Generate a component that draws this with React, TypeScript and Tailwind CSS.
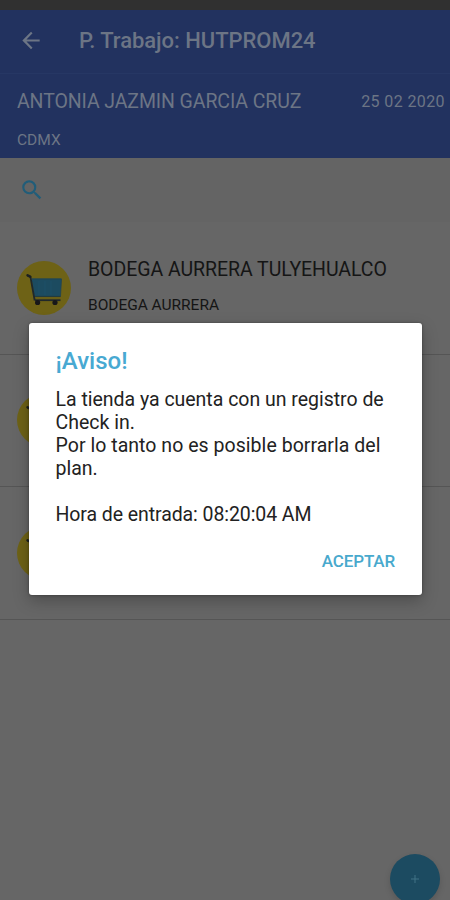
import { MdArrowBack, MdSearch } from 'react-icons/md'

const stores = [
  { name: 'BODEGA AURRERA TULYEHUALCO', chain: 'BODEGA AURRERA' },
  { name: '', chain: '' },
  { name: '', chain: '' },
]

function CartLogo() {
  return (
    <svg viewBox="0 0 54 54" className="h-[54px] w-[54px] shrink-0">
      <circle cx="27" cy="27" r="27" fill="#6e6216" />
      <path d="M14.5 17.5h30l-1 18H17.5z" fill="#1c4b60" />
      <path d="M22 20v14M28 20v14M34 20v14" stroke="#20516a" strokeWidth="0.8" />
      <path d="M17 37h26.5" stroke="#685e18" strokeWidth="2" />
      <path d="M17 35.4h26.7" stroke="#20383f" strokeWidth="1" />
      <path d="M18 39.2h25.5" stroke="#20282a" strokeWidth="1.8" />
      <path d="M10.5 14.5l3 1.5 4.2 23.5" fill="none" stroke="#20282a" strokeWidth="1.8" />
      <path d="M14.5 18h30l-1 17" fill="none" stroke="#23434f" strokeWidth="0.8" />
      <path d="M10.6 14.4l2.6 1.2" stroke="#1b2021" strokeWidth="2.6" strokeLinecap="round" />
      <circle cx="20.6" cy="41.5" r="2.6" fill="#171719" />
      <circle cx="38" cy="41.5" r="2.6" fill="#171719" />
    </svg>
  )
}

function Header() {
  return (
    <header className="bg-[#22325f] text-[#6c7585]">
      <div className="h-[10px] bg-[#303030]" />
      <div className="flex h-[64px] items-center border-b border-[#263764] pl-[18px]">
        <MdArrowBack className="h-[26px] w-[26px] shrink-0 -translate-y-[1.5px]" />
        <h1 className="ml-[35px] -translate-y-px whitespace-nowrap text-[22px] font-medium leading-none tracking-[-0.04px]">
          P. Trabajo: HUTPROM24
        </h1>
      </div>
      <div className="h-[84px] pl-[17px] pr-[5px] pt-[16px]">
        <div className="flex items-center justify-between whitespace-nowrap">
          <span className="text-[19.5px] leading-[24px] tracking-[-0.1px]">ANTONIA JAZMIN GARCIA CRUZ</span>
          <span className="text-[16px] leading-[24px] tracking-[0.4px]">25 02 2020</span>
        </div>
        <p className="mt-[15px] text-[15.5px] leading-[22px]">CDMX</p>
      </div>
    </header>
  )
}

function Dialog() {
  return (
    <div
      role="dialog"
      className="absolute left-[29px] top-[323px] h-[272px] w-[392.5px] rounded-[3px] bg-white px-[26.5px] pt-[24px] text-[#222] shadow-[0_6px_16px_rgba(0,0,0,0.25),0_0_3px_rgba(0,0,0,0.35)]"
    >
      <h2 className="text-[24px] font-medium leading-[29px] text-[#48a9d2]">¡Aviso!</h2>
      <div className="mt-[12px] whitespace-nowrap text-[19.5px] leading-[23px]">
        <p className="tracking-[-0.02px]">La tienda ya cuenta con un registro de</p>
        <p>Check in.</p>
        <p className="tracking-[0.04px]">Por lo tanto no es posible borrarla del</p>
        <p>plan.</p>
        <p className="mt-[23px] tracking-[-0.08px]">Hora de entrada: 08:20:04 AM</p>
      </div>
      <div className="mt-[24px] flex justify-end">
        <button className="text-[17px] font-medium leading-[22px] tracking-[-0.15px] text-[#48a9cd]">ACEPTAR</button>
      </div>
    </div>
  )
}

export default function App() {
  return (
    <div className="relative h-[900px] w-[450px] overflow-hidden bg-[#666] font-['Roboto',sans-serif]">
      <Header />

      {/* Buscador */}
      <div className="flex h-[64px] items-center bg-[#646464] pl-[19px]">
        <MdSearch className="h-[26px] w-[26px] text-[#215d79]" />
      </div>

      {/* Lista de tiendas */}
      <ul>
        {stores.map((store, i) => (
          <li key={i} className="flex h-[132.5px] items-center border-b border-[#555] pl-[17px]">
            <CartLogo />
            <div className="ml-[17px] -translate-y-px whitespace-nowrap text-[#151515]">
              <p className="text-[19.5px] leading-[24px] tracking-[-0.05px]">{store.name}</p>
              <p className="mt-[12px] text-[15.5px] leading-[22px] tracking-[-0.03px]">{store.chain}</p>
            </div>
          </li>
        ))}
      </ul>

      <button className="absolute left-[389.5px] top-[854px] flex h-[50px] w-[50px] items-center justify-center rounded-full bg-[#1c4b61] shadow-[0_3px_6px_rgba(0,0,0,0.15)]">
        <svg viewBox="0 0 10 10" className="h-[10px] w-[10px]">
          <path d="M5 1v8M1 5h8" stroke="#417286" strokeWidth="1" />
        </svg>
      </button>

      <Dialog />
    </div>
  )
}
